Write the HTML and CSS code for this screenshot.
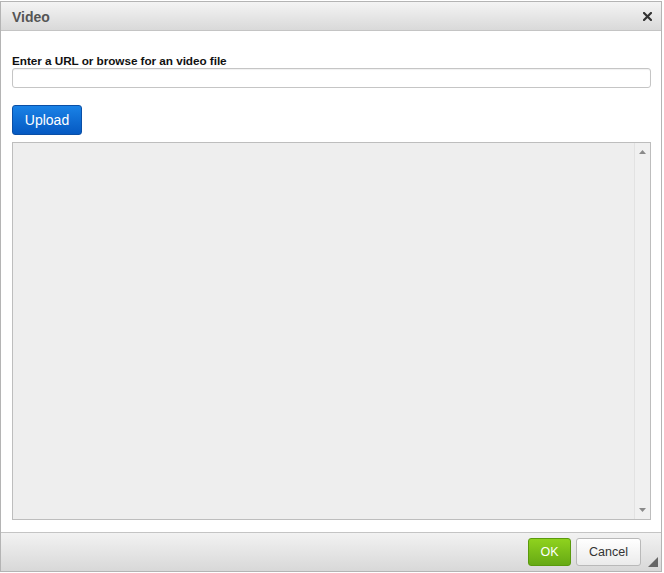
FILE: index.html
```html
<!DOCTYPE html>
<html>
<head>
<meta charset="utf-8">
<link rel="stylesheet" href="styles.css">
</head>
<body>
<div class="dialog">
  <div class="titlebar">
    <span class="title">Video</span>
    <svg class="close" width="9" height="9" viewBox="0 0 9 9"><path d="M1 1 L8 8 M8 1 L1 8" stroke="#333" stroke-width="2.2" stroke-linecap="square"/></svg>
  </div>
  <div class="content">
    <label class="label">Enter a URL or browse for an video file</label>
    <div class="input"></div>
    <button class="upload">Upload</button>
    <div class="frame">
      <div class="frame-body"></div>
      <div class="scrollbar">
        <svg class="arrow" width="7" height="4" viewBox="0 0 7 4"><path d="M0 4 L3.5 0 L7 4 Z" fill="#8a8a8a"/></svg>
        <svg class="arrow" width="7" height="4" viewBox="0 0 7 4"><path d="M0 0 L3.5 4 L7 0 Z" fill="#8a8a8a"/></svg>
      </div>
    </div>
  </div>
  <div class="footer">
    <button class="btn ok">OK</button>
    <button class="btn cancel">Cancel</button>
    <svg class="resize" width="10" height="10" viewBox="0 0 10 10"><path d="M10 0 L10 10 L0 10 Z" fill="#666"/></svg>
  </div>
</div>
</body>
</html>
```
FILE: styles.css
```css
html, body {
  margin: 0;
  padding: 0;
  background: #fff;
}
body {
  width: 664px;
  height: 573px;
  overflow: hidden;
  font-family: "Liberation Sans", Arial, sans-serif;
}
.dialog {
  box-sizing: border-box;
  width: 662px;
  height: 571px;
  margin-top: 1px;
  border: 1px solid #b4b4b4;
  background: #fff;
  display: flex;
  flex-direction: column;
}
.titlebar {
  height: 28px;
  flex: none;
  border-bottom: 1px solid #c4c4c4;
  background: linear-gradient(#f4f4f4, #d9d9d9);
  display: flex;
  align-items: center;
  justify-content: space-between;
  padding: 0 9px 0 11px;
}
.title {
  font-weight: bold;
  font-size: 14px;
  color: #555;
  padding-top: 1px;
}
.close {
  margin-top: 1px;
}
.content {
  flex: 1;
  display: flex;
  flex-direction: column;
  padding: 23px 10px 10px 11px;
}
.label {
  font-weight: bold;
  font-size: 11.75px;
  letter-spacing: -0.05px;
  color: #111;
  line-height: 14px;
}
.input {
  height: 18px;
  border: 1px solid #c5c5c5;
  border-radius: 3px;
  background: #fff;
  box-shadow: inset 0 1px 1px rgba(0,0,0,0.06);
}
.upload {
  align-self: flex-start;
  margin-top: 17px;
  width: 70px;
  height: 30px;
  border: 1px solid #0a4fa6;
  border-radius: 3px;
  background: linear-gradient(#1a82e6, #0559c2);
  color: #fff;
  font-family: "Liberation Sans", Arial, sans-serif;
  font-size: 14px;
  padding: 0;
}
.frame {
  margin-top: 7px;
  height: 378px;
  box-sizing: border-box;
  border: 1px solid #bdbdbd;
  background: #eee;
  display: flex;
}
.frame-body {
  flex: 1;
}
.scrollbar {
  width: 15px;
  border-left: 1px solid #e2e2e2;
  background: #f0f0f0;
  display: flex;
  flex-direction: column;
  justify-content: space-between;
  align-items: center;
  padding: 7px 0 7px;
}
.footer {
  height: 38px;
  flex: none;
  border-top: 1px solid #c4c4c4;
  background: linear-gradient(#f2f2f2, #d8d8d8);
  display: flex;
  align-items: center;
  justify-content: flex-end;
  padding: 0 3px 0 0;
  position: relative;
}
.btn {
  height: 28px;
  border-radius: 3px;
  font-family: "Liberation Sans", Arial, sans-serif;
  font-size: 12.5px;
  padding: 0;
}
.ok {
  width: 43px;
  border: 1px solid #5a9a0c;
  background: linear-gradient(#8fd21e, #66a914);
  color: #fff;
  margin-right: 5px;
}
.cancel {
  width: 65px;
  border: 1px solid #b9b9b9;
  background: linear-gradient(#ffffff, #ebebeb);
  color: #333;
  margin-right: 17px;
}
.resize {
  position: absolute;
  right: 3px;
  bottom: 4px;
}
```
